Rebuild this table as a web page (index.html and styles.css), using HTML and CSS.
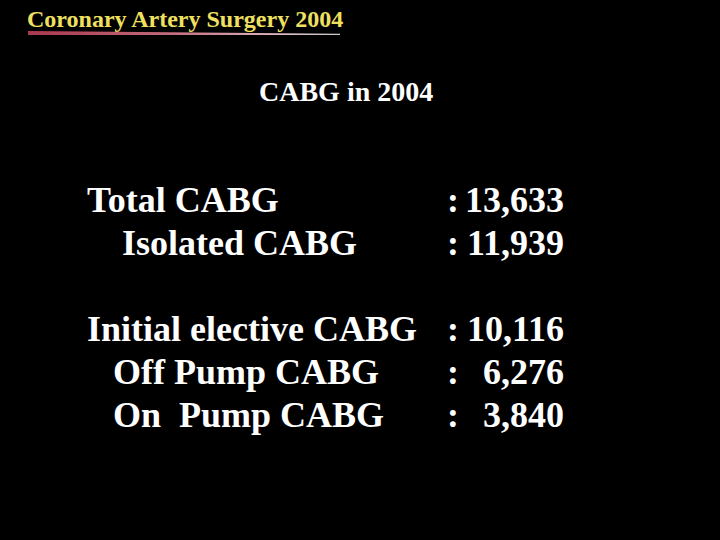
FILE: index.html
```html
<!DOCTYPE html>
<html lang="en">
<head>
    <meta charset="UTF-8">
    <meta name="viewport" content="width=device-width, initial-scale=1.0">
    <title>Coronary Artery Surgery 2004</title>
    <link rel="stylesheet" href="styles.css">
</head>
<body>

    <!-- Judul slide -->
    <div class="slide-title">Coronary Artery Surgery 2004</div>
    <div class="title-rule"></div>

    <div class="subtitle">CABG in 2004</div>

    <!-- Tabel angka -->
    <div class="stats">
        <div class="row">
            <span class="label">Total CABG</span>
            <span class="colon">:</span>
            <span class="value">13,633</span>
        </div>
        <div class="row">
            <span class="label sub">Isolated CABG</span>
            <span class="colon">:</span>
            <span class="value">11,939</span>
        </div>

        <div class="row spacer"></div>

        <div class="row">
            <span class="label">Initial elective CABG</span>
            <span class="colon">:</span>
            <span class="value">10,116</span>
        </div>
        <div class="row">
            <span class="label sub2">Off Pump CABG</span>
            <span class="colon">:</span>
            <span class="value">6,276</span>
        </div>
        <div class="row">
            <span class="label sub2">On&nbsp; Pump CABG</span>
            <span class="colon">:</span>
            <span class="value">3,840</span>
        </div>
    </div>

</body>
</html>
```

FILE: styles.css
```css
html, body {
    margin: 0;
    background-color: #000;
    height: 100%;
}

body {
    font-family: "Liberation Serif", "Times New Roman", serif;
    font-weight: bold;
    color: #fff;
    overflow: hidden;
}

.slide-title {
    color: #f0e060;
    font-size: 24px;
    line-height: 30px;
    padding-top: 4px;
    padding-left: 27px;
}

/* Garis bawah judul, makin tipis ke kanan */
.title-rule {
    margin-top: -3px;
    margin-left: 28px;
    width: 312px;
    height: 4px;
    background: linear-gradient(to right, #a8384f 0%, #c46a7c 45%, #dcb8c0 80%, #c8c8c8 100%);
    clip-path: polygon(0 0, 100% 70%, 100% 100%, 0 100%);
}

.subtitle {
    margin-top: 41px;
    padding-left: 259px;
    font-size: 28px;
    line-height: 32px;
}

.stats {
    margin-top: 71px;
    padding-left: 87px;
    font-size: 36px;
    line-height: 43px;
}

.row {
    display: flex;
    height: 43px;
}

.label {
    width: 360px;
    white-space: pre;
}

.label.sub {
    padding-left: 35px;
    width: 325px;
}

.label.sub2 {
    padding-left: 26px;
    width: 334px;
}

.colon {
    width: 12px;
}

.value {
    width: 105px;
    text-align: right;
}
```
